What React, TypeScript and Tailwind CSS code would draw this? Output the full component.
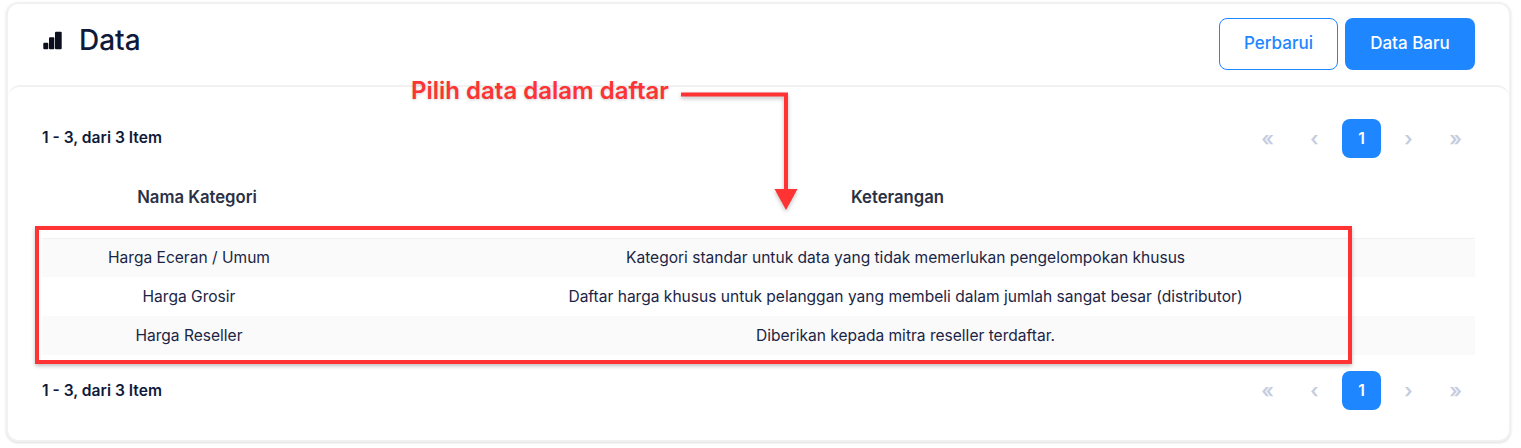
const rows = [
  ["Harga Eceran / Umum", "Kategori standar untuk data yang tidak memerlukan pengelompokan khusus"],
  ["Harga Grosir", "Daftar harga khusus untuk pelanggan yang membeli dalam jumlah sangat besar (distributor)"],
  ["Harga Reseller", "Diberikan kepada mitra reseller terdaftar."],
];

function Pager({ labelClass }: { labelClass: string }) {
  return (
    <div className="flex items-center justify-between h-[39px]">
      <div className={labelClass}>1 - 3, dari 3 Item</div>
      <div className="flex gap-2 text-[#c5cce0] text-[20px] font-semibold">
        <div className="w-[39px] h-[39px] flex items-center justify-center">«</div>
        <div className="w-[39px] h-[39px] flex items-center justify-center">‹</div>
        <div className="w-[39px] h-[39px] flex items-center justify-center rounded-lg bg-[#1e86ff] text-white text-[15.6px] font-semibold">1</div>
        <div className="w-[39px] h-[39px] flex items-center justify-center">›</div>
        <div className="w-[39px] h-[39px] flex items-center justify-center">»</div>
      </div>
    </div>
  );
}

export default function App() {
  return (
    <div className="relative w-[1521px] h-[448px] bg-white overflow-hidden font-['Inter',sans-serif]">
      <div className="mx-[6px] mt-[2px] w-[1505px] h-[440px] rounded-xl border-2 border-[#f1f1f4] shadow-sm bg-white">
        {/* header */}
        <div className="flex justify-between h-[81px] pl-[34px] pr-[34px] pt-[14px]">
          <div className="flex items-start gap-[17px] pt-[3px]">
            <svg width="20" height="20" viewBox="0 0 20 20" className="mt-[9px]" fill="#0b0f1e">
              <rect x="1.3" y="12.7" width="5" height="6.6" rx="1" />
              <rect x="7" y="7.3" width="5.3" height="12" rx="1" />
              <rect x="13" y="1.7" width="6.7" height="17.6" rx="1" />
            </svg>
            <h1 className="text-[28px] leading-[38px] font-medium text-[#0f1a3a]">Data</h1>
          </div>
          <div className="flex gap-[7px]">
            <button className="w-[119px] h-[52px] rounded-lg border border-[#1e86ff] text-[#1e86ff] text-[17px] font-medium">Perbarui</button>
            <button className="w-[130px] h-[52px] rounded-lg bg-[#1e86ff] text-white text-[17px] font-medium">Data Baru</button>
          </div>
        </div>
        {/* content */}
        <div className="h-[355px] rounded-xl border-t-2 border-[#f1f1f4] pl-[34px] pr-[34px] pt-[32px]">
          <Pager labelClass="text-[15.6px] font-semibold text-[#0f1a3a] pb-[2px]" />
          <table className="w-full mt-[20px] mb-[16px] table-fixed text-[15.55px] text-[#1b2545]">
            <thead>
              <tr className="h-[60px] border-b border-[#f1f1f4] text-[#2a3145] text-[16.7px]">
                <th className="w-[294px] font-semibold pl-[16px] pb-[21px]">Nama Kategori</th>
                <th className="font-semibold pr-[16px] pb-[21px]">Keterangan</th>
              </tr>
            </thead>
            <tbody>
              {rows.map((r, i) => (
                <tr key={r[0]} className={i % 2 == 0 ? "h-[39px] bg-[#fafafa]" : "h-[39px] bg-white"}>
                  <td className="text-center">{r[0]}</td>
                  <td className="text-center">{r[1]}</td>
                </tr>
              ))}
            </tbody>
          </table>
          <Pager labelClass="text-[15.6px] font-semibold text-[#0f1a3a]" />
        </div>
      </div>

      {/* annotation overlay */}
      <div className="absolute left-[411px] top-[76px] text-[24px] leading-[30px] font-semibold text-[#ff3333] [text-shadow:0_1px_3px_rgba(0,0,0,0.2)]">Pilih data dalam daftar</div>
      <div className="absolute left-[35px] top-[226px] w-[1317px] h-[138px] border-4 border-[#ff3333] shadow-[0_2px_4px_rgba(0,0,0,0.25)]" />
      <svg className="absolute left-[675px] top-[85px]" width="130" height="130" viewBox="0 0 130 130" fill="none" style={{ filter: "drop-shadow(0 2px 2px rgba(0,0,0,0.25))" }}>
        <path d="M6 9.5 H111 V106" stroke="#ff3333" strokeWidth="4" />
        <path d="M99.5 104 H122.5 L111 125 Z" fill="#ff3333" />
      </svg>
    </div>
  );
}
